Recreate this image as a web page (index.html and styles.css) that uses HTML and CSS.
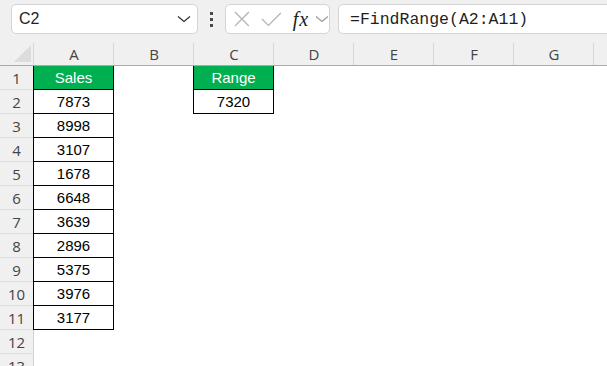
FILE: index.html
```html
<!DOCTYPE html>
<html lang="en">
<head>
    <meta charset="UTF-8">
    <title>FindRange</title>
    <link rel="stylesheet" href="styles.css">
</head>
<body>

    <!-- Formula bar -->
    <div class="toolbar">
        <div class="name-box">
            <span>C2</span>
            <svg class="chev" width="14" height="8" viewBox="0 0 14 8"><path d="M1 1.5 L7 6.5 L13 1.5" fill="none" stroke="#333" stroke-width="1.3"/></svg>
        </div>
        <div class="dots"><i></i><i></i><i></i></div>
        <div class="fn-box">
            <svg width="16" height="16" viewBox="0 0 16 16"><path d="M1 1 L15 15 M15 1 L1 15" stroke="#b4b4b4" stroke-width="1.3"/></svg>
            <svg class="tick" width="21" height="15" viewBox="0 0 21 15"><path d="M1 7 L7.5 13.5 L20 1" fill="none" stroke="#b4b4b4" stroke-width="1.3"/></svg>
            <span class="fx">fx</span>
            <svg width="14" height="8" viewBox="0 0 14 8"><path d="M1 1.5 L7 6.5 L13 1.5" fill="none" stroke="#999" stroke-width="1.2"/></svg>
        </div>
        <div class="formula">=FindRange(A2:A11)</div>
    </div>

    <!-- Grid -->
    <div class="sheet">
        <div class="corner"><svg width="18" height="18" viewBox="0 0 18 18"><path d="M17 0 L17 17 L0 17 Z" fill="#dcdcdc"/></svg></div>
        <div class="col-head">A</div>
        <div class="col-head">B</div>
        <div class="col-head">C</div>
        <div class="col-head">D</div>
        <div class="col-head">E</div>
        <div class="col-head">F</div>
        <div class="col-head">G</div>
        <div class="col-head">H</div>

        <div class="row-head">1</div>
        <div class="cell box head">Sales</div><div class="cell"></div><div class="cell box head">Range</div><div class="cell"></div><div class="cell"></div><div class="cell"></div><div class="cell"></div><div class="cell"></div>

        <div class="row-head">2</div>
        <div class="cell box">7873</div><div class="cell"></div><div class="cell box">7320</div><div class="cell"></div><div class="cell"></div><div class="cell"></div><div class="cell"></div><div class="cell"></div>

        <div class="row-head">3</div>
        <div class="cell box">8998</div><div class="cell"></div><div class="cell"></div><div class="cell"></div><div class="cell"></div><div class="cell"></div><div class="cell"></div><div class="cell"></div>

        <div class="row-head">4</div>
        <div class="cell box">3107</div><div class="cell"></div><div class="cell"></div><div class="cell"></div><div class="cell"></div><div class="cell"></div><div class="cell"></div><div class="cell"></div>

        <div class="row-head">5</div>
        <div class="cell box">1678</div><div class="cell"></div><div class="cell"></div><div class="cell"></div><div class="cell"></div><div class="cell"></div><div class="cell"></div><div class="cell"></div>

        <div class="row-head">6</div>
        <div class="cell box">6648</div><div class="cell"></div><div class="cell"></div><div class="cell"></div><div class="cell"></div><div class="cell"></div><div class="cell"></div><div class="cell"></div>

        <div class="row-head">7</div>
        <div class="cell box">3639</div><div class="cell"></div><div class="cell"></div><div class="cell"></div><div class="cell"></div><div class="cell"></div><div class="cell"></div><div class="cell"></div>

        <div class="row-head">8</div>
        <div class="cell box">2896</div><div class="cell"></div><div class="cell"></div><div class="cell"></div><div class="cell"></div><div class="cell"></div><div class="cell"></div><div class="cell"></div>

        <div class="row-head">9</div>
        <div class="cell box">5375</div><div class="cell"></div><div class="cell"></div><div class="cell"></div><div class="cell"></div><div class="cell"></div><div class="cell"></div><div class="cell"></div>

        <div class="row-head">10</div>
        <div class="cell box">3976</div><div class="cell"></div><div class="cell"></div><div class="cell"></div><div class="cell"></div><div class="cell"></div><div class="cell"></div><div class="cell"></div>

        <div class="row-head">11</div>
        <div class="cell box">3177</div><div class="cell"></div><div class="cell"></div><div class="cell"></div><div class="cell"></div><div class="cell"></div><div class="cell"></div><div class="cell"></div>

        <div class="row-head">12</div>
        <div class="cell"></div><div class="cell"></div><div class="cell"></div><div class="cell"></div><div class="cell"></div><div class="cell"></div><div class="cell"></div><div class="cell"></div>

        <div class="row-head">13</div>
        <div class="cell"></div><div class="cell"></div><div class="cell"></div><div class="cell"></div><div class="cell"></div><div class="cell"></div><div class="cell"></div><div class="cell"></div>
    </div>

</body>
</html>
```

FILE: styles.css
```css
body {
    margin: 0;
    background: #fff;
    font-family: "Liberation Sans", Arial, sans-serif;
    overflow: hidden;
}

/* formula bar */
.toolbar {
    display: flex;
    height: 34px;
    box-sizing: border-box;
    padding: 4px 0 0 11px;
    background: #f0f0f0;
    overflow: hidden;
}
.name-box, .fn-box, .formula {
    box-sizing: border-box;
    height: 30px;
    background: #fff;
    border: 1px solid #d4d4d4;
    border-radius: 5px;
    display: flex;
    align-items: center;
}
.name-box {
    width: 187px;
    padding: 0 6px 0 7px;
    justify-content: space-between;
    font-size: 16px;
    color: #1f1f1f;
}
.dots {
    width: 27px;
    display: flex;
    flex-direction: column;
    align-items: center;
    justify-content: center;
    gap: 3px;
}
.dots i {
    width: 3px;
    height: 3px;
    background: #4a4a4a;
}
.fn-box {
    width: 105px;
    padding: 0 0 0 8px;
    gap: 11px;
}
.fn-box .tick {
    margin-left: 0;
}
.fx {
    font-family: "Liberation Serif", serif;
    font-style: italic;
    font-size: 20px;
    color: #222;
    margin: 0 -5px 0 0;
    letter-spacing: 1px;
}
.formula {
    flex: 1;
    margin: 0 -10px 0 8px;
    padding-left: 11px;
    font-family: "Liberation Mono", monospace;
    font-size: 16.5px;
    color: #1f1f1f;
}

/* sheet */
.sheet {
    display: grid;
    grid-template-columns: 34px repeat(8, 80px);
    grid-template-rows: 32px repeat(13, 24px);
    font-size: 15px;
}
.corner, .col-head {
    box-sizing: border-box;
    background: linear-gradient(#d6d6d6, #d6d6d6) right bottom / 1px 22px no-repeat, #f0f0f0;
    border-bottom: 1px solid #ababab;
}
.corner {
    display: flex;
    align-items: flex-end;
    justify-content: flex-end;
    padding: 0 2px 2px 0;
}
.col-head {
    padding-top: 9px;
    display: flex;
    align-items: center;
    justify-content: center;
    font-family: "Open Sans", sans-serif;
    color: #444;
}
.row-head {
    box-sizing: border-box;
    background: #f0f0f0;
    border-right: 1px solid #d2d2d2;
    border-bottom: 1px solid #dedede;
    display: flex;
    align-items: center;
    justify-content: center;
    font-family: "Open Sans", sans-serif;
    color: #444;
}
.cell {
    box-sizing: border-box;
    display: flex;
    align-items: center;
    justify-content: center;
    color: #000;
}
.box {
    border-right: 1px solid #000;
    border-bottom: 1px solid #000;
    box-shadow: -1px 0 0 #000;
}
.head {
    background: #00b050;
    color: #fff;
}
```
